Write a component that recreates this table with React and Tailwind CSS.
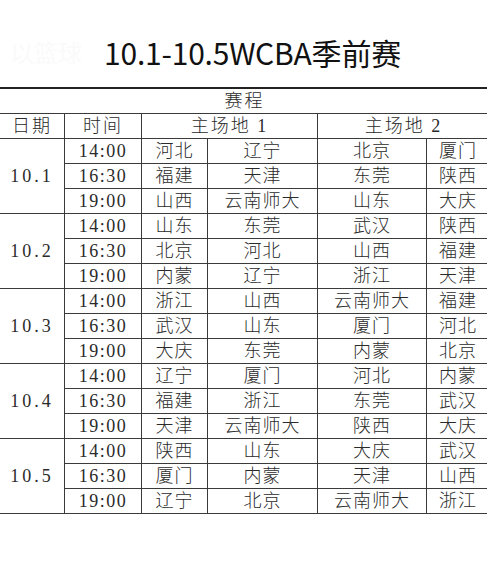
const schedule = [
  {
    date: "10.1",
    games: [
      ["14:00", "河北", "辽宁", "北京", "厦门"],
      ["16:30", "福建", "天津", "东莞", "陕西"],
      ["19:00", "山西", "云南师大", "山东", "大庆"],
    ],
  },
  {
    date: "10.2",
    games: [
      ["14:00", "山东", "东莞", "武汉", "陕西"],
      ["16:30", "北京", "河北", "山西", "福建"],
      ["19:00", "内蒙", "辽宁", "浙江", "天津"],
    ],
  },
  {
    date: "10.3",
    games: [
      ["14:00", "浙江", "山西", "云南师大", "福建"],
      ["16:30", "武汉", "山东", "厦门", "河北"],
      ["19:00", "大庆", "东莞", "内蒙", "北京"],
    ],
  },
  {
    date: "10.4",
    games: [
      ["14:00", "辽宁", "厦门", "河北", "内蒙"],
      ["16:30", "福建", "浙江", "东莞", "武汉"],
      ["19:00", "天津", "云南师大", "陕西", "大庆"],
    ],
  },
  {
    date: "10.5",
    games: [
      ["14:00", "陕西", "山东", "大庆", "武汉"],
      ["16:30", "厦门", "内蒙", "天津", "山西"],
      ["19:00", "辽宁", "北京", "云南师大", "浙江"],
    ],
  },
]

const cell = "border border-[#3a3a3a] p-0 text-center align-middle leading-[18px]"

export default function App() {
  return (
    <div className="w-[487px] h-[585px] overflow-hidden bg-white">
      <div className="relative h-[87px] flex items-center justify-center pt-[17px] pl-[18px]">
        <span className="absolute left-[10px] top-[34px] text-[24px] text-[#fafafa] font-['Noto_Sans_CJK_SC',sans-serif]">
          以篮球
        </span>
        <h1 className="text-[30px] leading-none text-[#111] font-['Noto_Sans_CJK_SC',sans-serif] tracking-[-0.2px]">
          10.1-10.5WCBA季前赛
        </h1>
      </div>
      <table className="-ml-[1px] w-[490px] table-fixed border-collapse text-[18px] text-[#2a2a2a] font-light font-['Liberation_Serif','Noto_Sans_CJK_SC',serif]">
        <colgroup>
          <col className="w-[65px]" />
          <col className="w-[77px]" />
          <col className="w-[66px]" />
          <col className="w-[110px]" />
          <col className="w-[109px]" />
          <col className="w-[63px]" />
        </colgroup>
        <tbody>
          <tr className="h-[25px]">
            <td colSpan={6} className={`${cell} border-t-2 border-t-[#222] tracking-[2px]`}>
              赛程
            </td>
          </tr>
          <tr className="h-[25px]">
            <td className={`${cell} tracking-[2px]`}>日期</td>
            <td className={`${cell} tracking-[2px]`}>时间</td>
            <td colSpan={2} className={`${cell} tracking-[2px]`}>主场地 1</td>
            <td colSpan={2} className={`${cell} tracking-[2px]`}>主场地 2</td>
          </tr>
          {schedule.map((day) =>
            day.games.map((g, i) => (
              <tr key={day.date + i} className="h-[25px]">
                {i === 0 && (
                  <td rowSpan={3} className={`${cell} tracking-[3px]`}>
                    {day.date}
                  </td>
                )}
                <td className={`${cell} tracking-[1.5px]`}>{g[0]}</td>
                <td className={`${cell} tracking-[1px]`}>{g[1]}</td>
                <td className={`${cell} tracking-[1px]`}>{g[2]}</td>
                <td className={`${cell} tracking-[1px]`}>{g[3]}</td>
                <td className={`${cell} tracking-[1px]`}>{g[4]}</td>
              </tr>
            ))
          )}
        </tbody>
      </table>
    </div>
  )
}
